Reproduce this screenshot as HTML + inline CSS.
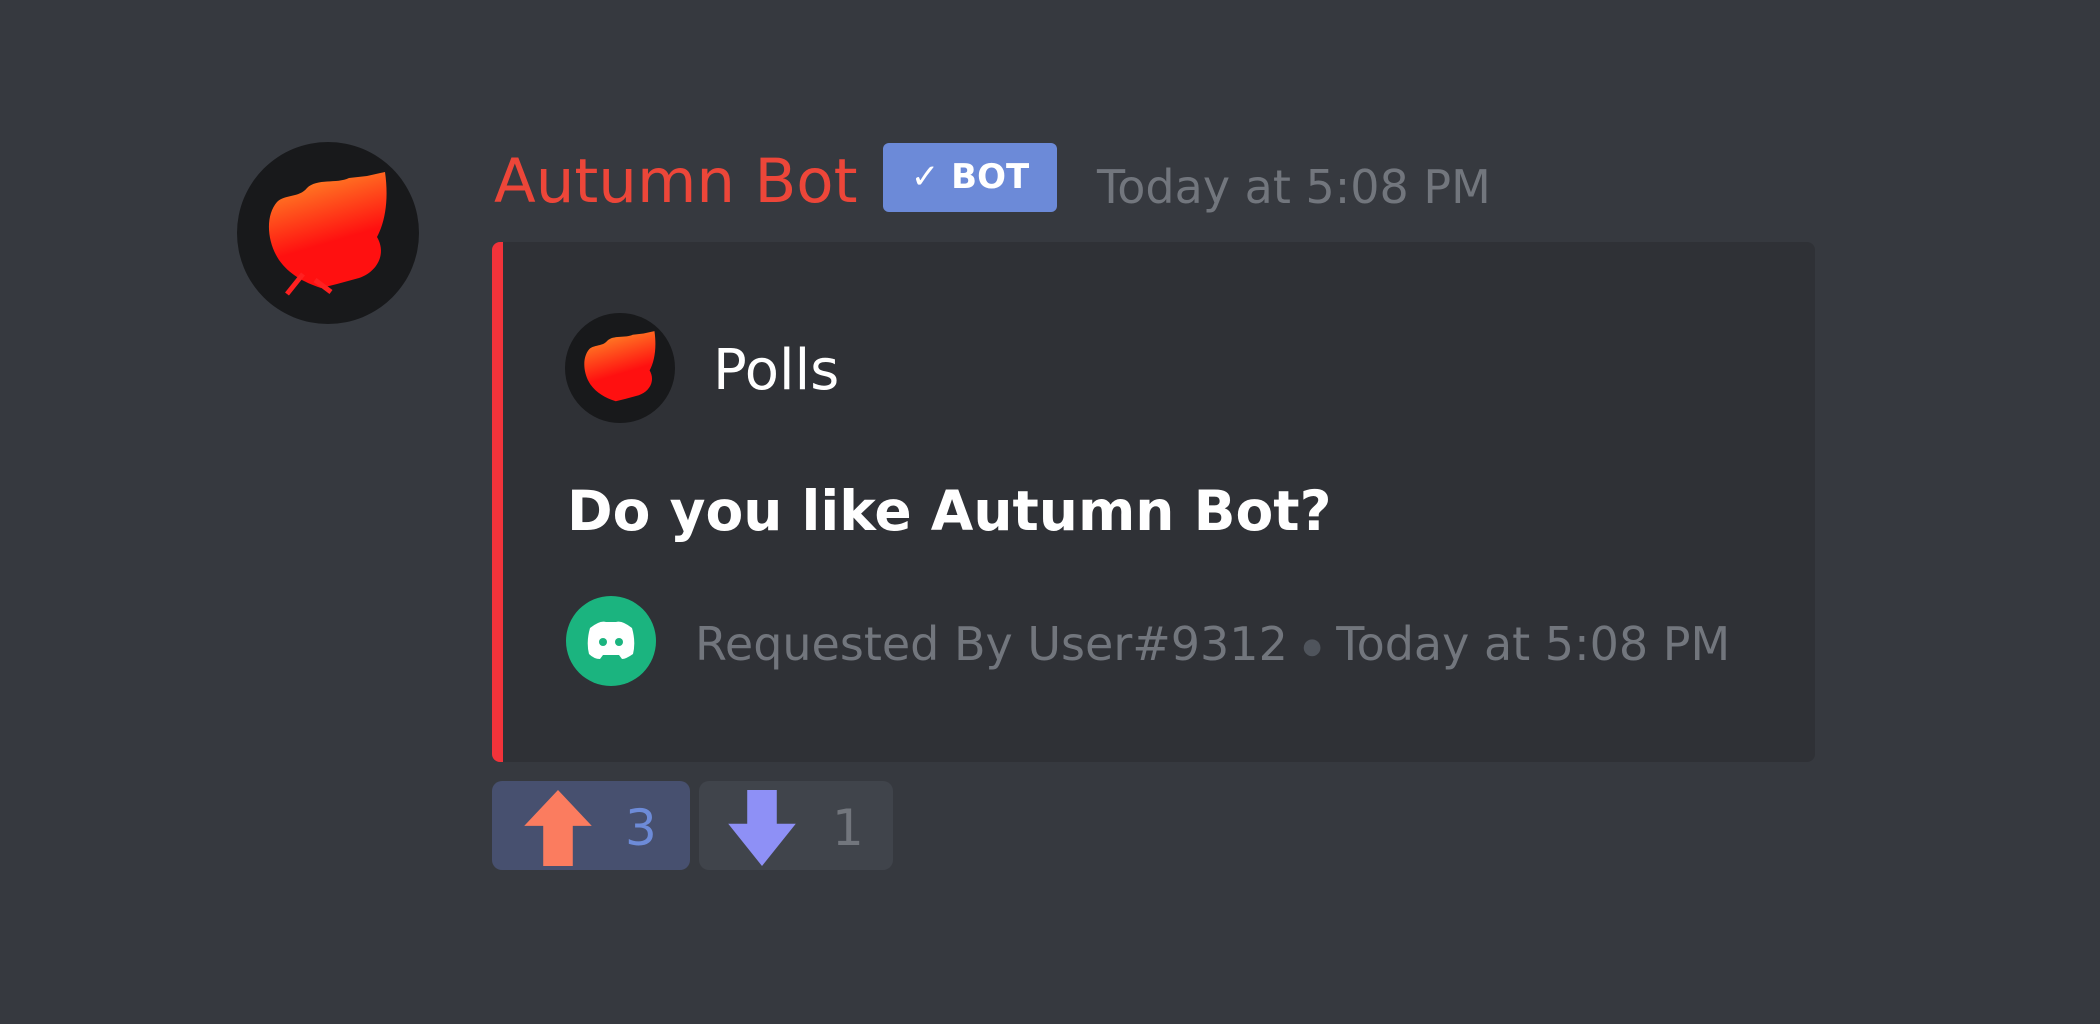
<!DOCTYPE html>
<html><head><meta charset="utf-8"><style>
body{margin:0;width:2100px;height:1024px;background:#36393f;font-family:"DejaVu Sans","Liberation Sans",sans-serif;position:relative;overflow:hidden}
.a{position:absolute;line-height:1;white-space:nowrap}
</style></head><body>
<svg class="a" style="left:237px;top:142px" width="182" height="182" viewBox="0 0 182 182">
<defs><linearGradient id="g" x1="0" y1="0" x2="0.3" y2="1"><stop offset="0" stop-color="#ff9a2a"/><stop offset="0.7" stop-color="#ff1010"/></linearGradient></defs>
<circle cx="91" cy="91" r="91" fill="#18191b"/>
<path d="M42 118 C30 100 28 74 40 60 C48 52 62 56 70 46 C80 36 100 42 112 36 L130 34 L148 30 C152 58 148 80 140 95 C150 112 140 130 122 136 L100 142 L84 146 C66 140 52 132 42 118Z" fill="url(#g)"/>
<path d="M66 132 L50 152 M78 138 L94 150" stroke="#ff2020" stroke-width="5"/>
</svg>
<div class="a" style="left:494px;top:151px;font-size:61px;color:#ed4639">Autumn Bot</div>
<div class="a" style="left:883px;top:143px;width:174px;height:69px;background:#6c8ad8;border-radius:6px;color:#fff;font-size:34px;font-weight:bold;line-height:69px;text-align:center">✓ BOT</div>
<div class="a" style="left:1097px;top:164px;font-size:46px;color:#72767d">Today at 5:08 PM</div>
<div class="a" style="left:492px;top:242px;width:1323px;height:520px;background:#2f3136;border-radius:8px;border-left:11px solid #f2333a;box-sizing:border-box"></div>
<svg class="a" style="left:565px;top:313px" width="110" height="110" viewBox="0 0 182 182">
<circle cx="91" cy="91" r="91" fill="#18191b"/>
<path d="M42 118 C30 100 28 74 40 60 C48 52 62 56 70 46 C80 36 100 42 112 36 L130 34 L148 30 C152 58 148 80 140 95 C150 112 140 130 122 136 L100 142 L84 146 C66 140 52 132 42 118Z" fill="url(#g)"/>
</svg>
<div class="a" style="left:713px;top:343px;font-size:56px;color:#fff">Polls</div>
<div class="a" style="left:567px;top:484px;font-size:55px;font-weight:bold;color:#fff">Do you like Autumn Bot?</div>
<svg class="a" style="left:566px;top:596px" width="90" height="90" viewBox="0 0 90 90">
<circle cx="45" cy="45" r="45" fill="#1bb47f"/>
<path d="M24 32 Q34 24 40 26 L50 26 Q56 24 66 32 Q70 46 67 58 Q60 63 56 63 L53 59 L37 59 L34 63 Q28 63 23 58 Q20 46 24 32Z" fill="#fff"/>
<circle cx="37" cy="46" r="4" fill="#1bb47f"/><circle cx="53" cy="46" r="4" fill="#1bb47f"/>
</svg>
<div class="a" style="left:695px;top:621px;font-size:46px;color:#72767d">Requested By User#9312 <span style="font-size:22px;vertical-align:middle;color:#4f545c">●</span> Today at 5:08 PM</div>
<div class="a" style="left:492px;top:781px;width:198px;height:89px;background:#47506f;border-radius:10px"></div>
<svg class="a" style="left:515px;top:790px" width="86" height="76" viewBox="0 0 80 72"><path d="M40 0 L72 34 L54 34 L54 72 L26 72 L26 34 L8 34Z" fill="#fb7c5f"/></svg>
<div class="a" style="left:625px;top:803px;font-size:50px;color:#6d8bd8">3</div>
<div class="a" style="left:699px;top:781px;width:194px;height:89px;background:#40444b;border-radius:10px"></div>
<svg class="a" style="left:719px;top:790px" width="86" height="76" viewBox="0 0 80 72"><path d="M40 72 L72 32 L54 32 L54 0 L26 0 L26 32 L8 32Z" fill="#8e90f6"/></svg>
<div class="a" style="left:832px;top:803px;font-size:50px;color:#72767d">1</div>
</body></html>
